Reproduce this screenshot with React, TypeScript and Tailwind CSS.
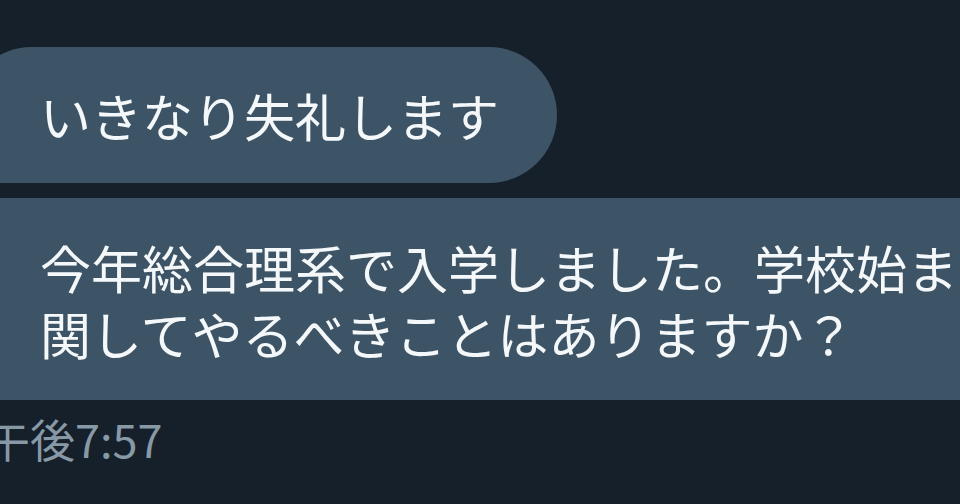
export default function App() {
  const font = { fontFamily: '"Noto Sans CJK JP", "Noto Sans", sans-serif' };
  return (
    <div
      className="h-[504px] w-[960px] overflow-hidden bg-[#15202b] pt-[47px] flex flex-col items-start"
      style={font}
    >
      {/* first message */}
      <div className="ml-[-36px] h-[136px] flex items-center pl-[76px] pr-[58px] rounded-[68px] rounded-bl-none bg-[#3d5466] text-[51px] leading-none text-[#f5f8fa] whitespace-nowrap">
        いきなり失礼します
      </div>

      {/* second message */}
      <div className="mt-[15px] ml-[-36px] w-[1100px] h-[202px] flex flex-col justify-center pl-[76px] pt-[2px] rounded-tl-[8px] bg-[#3d5466] text-[51px] leading-[66px] text-[#f5f8fa] whitespace-nowrap">
        <span>今年総合理系で入学しました。学校始まるまでに勉強に</span>
        <span>関してやるべきことはありますか？</span>
      </div>

      {/* timestamp */}
      <div className="mt-[11px] ml-[-15px] text-[45px] leading-[56px] text-[#8899a6] whitespace-nowrap">
        午後7:57
      </div>
    </div>
  );
}
